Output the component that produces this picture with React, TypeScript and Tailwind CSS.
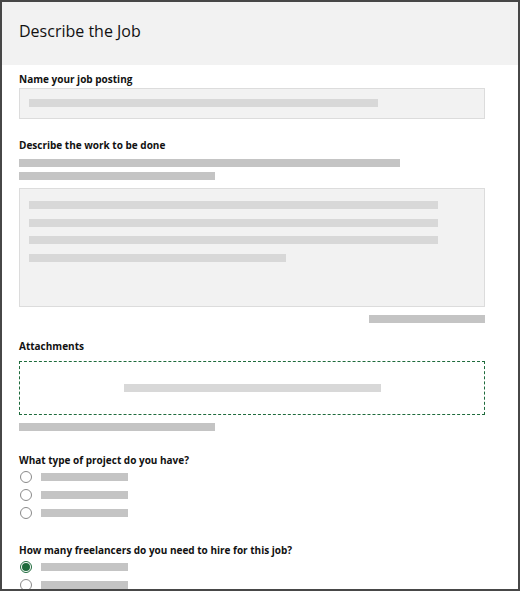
import React from 'react'

const Bar = ({ w, light }: { w: string; light?: boolean }) => (
    <div className={`h-[8px] ${w} ${light ? 'bg-[#d8d8d8]' : 'bg-[#c4c4c4]'}`} />
)

const Label = ({ children, mt }: { children: React.ReactNode; mt: string }) => (
    <div className={`${mt} h-[12px] text-[10px] leading-[12px] font-bold text-[#111]`}>{children}</div>
)

const Radio = ({ checked }: { checked?: boolean }) => (
    <div className="h-[18px] flex items-center">
        <div
            className={`ml-[1px] w-[12px] h-[12px] rounded-full border flex items-center justify-center ${checked ? 'border-[#1e6b3c]' : 'border-[#8a8a8a]'}`}
        >
            {checked && <div className="w-[8px] h-[8px] rounded-full bg-[#1e6b3c]" />}
        </div>
        <div className="ml-[9px]">
            <Bar w="w-[87px]" />
        </div>
    </div>
)

export default function App() {
    return (
        <div
            className="w-[520px] h-[591px] overflow-hidden border-2 border-[#474747] bg-white"
            style={{ fontFamily: '"Open Sans", "Noto Sans", sans-serif' }}
        >
            {/* en-tête */}
            <div className="h-[63px] bg-[#f2f2f2] flex items-center pl-[17px] pb-[5px]">
                <h1 className="text-[16px] font-medium text-[#111]">Describe the Job</h1>
            </div>

            <div className="pl-[17px] w-[483px]">
                <Label mt="mt-[8px]">Name your job posting</Label>
                <div className="mt-[3px] h-[31px] bg-[#f2f2f2] border border-[#dcdcdc] pl-[9px] pt-[10px]">
                    <Bar w="w-[349px]" light />
                </div>

                <Label mt="mt-[20px]">Describe the work to be done</Label>
                <div className="mt-[8px]">
                    <Bar w="w-[381px]" />
                </div>
                <div className="mt-[5px]">
                    <Bar w="w-[196px]" />
                </div>
                <div className="mt-[8px] h-[119px] bg-[#f2f2f2] border border-[#dcdcdc] pl-[9px] pt-[12px] flex flex-col gap-[9.5px]">
                    <Bar w="w-[409px]" light />
                    <Bar w="w-[409px]" light />
                    <Bar w="w-[409px]" light />
                    <Bar w="w-[257px]" light />
                </div>
                <div className="mt-[8px] flex justify-end">
                    <Bar w="w-[116px]" />
                </div>

                <Label mt="mt-[17px]">Attachments</Label>
                <div className="mt-[9px] h-[54px] border border-dashed border-[#1e6b3c] flex items-center justify-center">
                    <Bar w="w-[257px]" light />
                </div>
                <div className="mt-[8px]">
                    <Bar w="w-[196px]" />
                </div>

                <Label mt="mt-[23px]">What type of project do you have?</Label>
                <div className="mt-[2px]">
                    <Radio />
                    <Radio />
                    <Radio />
                </div>

                <Label mt="mt-[22px]">How many freelancers do you need to hire for this job?</Label>
                <div className="mt-[2px]">
                    <Radio checked />
                    <Radio />
                </div>
            </div>
        </div>
    )
}
